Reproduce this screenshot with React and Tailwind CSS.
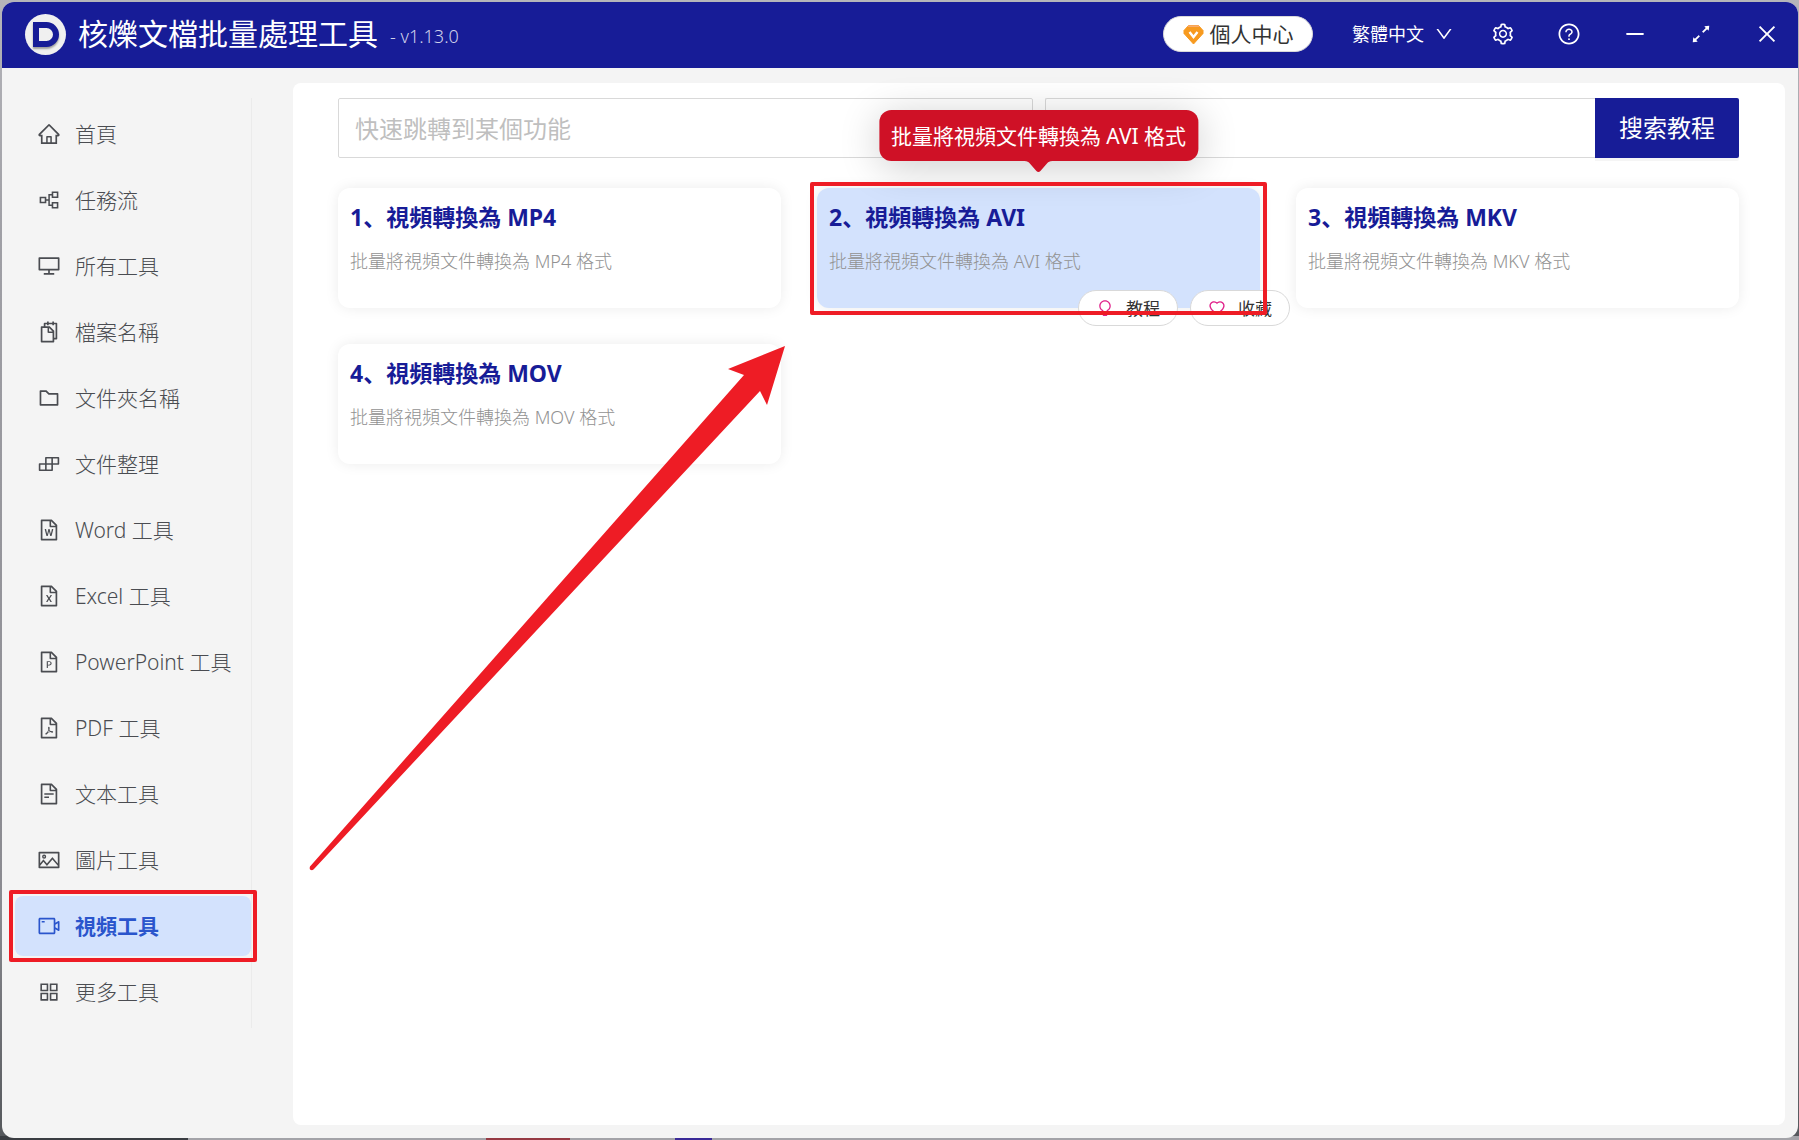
import React, { useState } from 'react';
import {
  AiOutlineAppstore,
  AiOutlineArrowsAlt,
  AiOutlineBuild,
  AiOutlineBulb,
  AiOutlineClose,
  AiOutlineDesktop,
  AiOutlineDown,
  AiOutlineFileExcel,
  AiOutlineFilePdf,
  AiOutlineFilePpt,
  AiOutlineFileText,
  AiOutlineFileWord,
  AiOutlineFolder,
  AiOutlineHeart,
  AiOutlineHome,
  AiOutlineMinus,
  AiOutlinePartition,
  AiOutlinePicture,
  AiOutlineQuestionCircle,
  AiOutlineSetting,
  AiOutlineSnippets,
  AiOutlineVideoCamera,
} from 'react-icons/ai';

const menu = [
  { label: '首頁', icon: AiOutlineHome },
  { label: '任務流', icon: AiOutlinePartition },
  { label: '所有工具', icon: AiOutlineDesktop },
  { label: '檔案名稱', icon: AiOutlineSnippets },
  { label: '文件夾名稱', icon: AiOutlineFolder },
  { label: '文件整理', icon: AiOutlineBuild },
  { label: 'Word 工具', icon: AiOutlineFileWord },
  { label: 'Excel 工具', icon: AiOutlineFileExcel },
  { label: 'PowerPoint 工具', icon: AiOutlineFilePpt },
  { label: 'PDF 工具', icon: AiOutlineFilePdf },
  { label: '文本工具', icon: AiOutlineFileText },
  { label: '圖片工具', icon: AiOutlinePicture },
  { label: '視頻工具', icon: AiOutlineVideoCamera },
  { label: '更多工具', icon: AiOutlineAppstore },
];

const tools = [
  { title: '視頻轉換為 MP4', desc: '批量將視頻文件轉換為 MP4 格式' },
  { title: '視頻轉換為 AVI', desc: '批量將視頻文件轉換為 AVI 格式', active: true },
  { title: '視頻轉換為 MKV', desc: '批量將視頻文件轉換為 MKV 格式' },
  { title: '視頻轉換為 MOV', desc: '批量將視頻文件轉換為 MOV 格式' },
];

const windowActions = [
  { label: '設置', icon: AiOutlineSetting },
  { label: '幫助', icon: AiOutlineQuestionCircle },
  { label: '最小化', icon: AiOutlineMinus },
  { label: '還原', icon: AiOutlineArrowsAlt },
  { label: '關閉', icon: AiOutlineClose },
];

function Logo() {
  return (
    <div className="flex h-[41px] w-[41px] items-center justify-center rounded-full bg-[#f0f0f0]">
      <div className="h-[25px] w-[26px] rounded-l-sm rounded-r-full border-6 border-[#171c97] bg-[#f0f0f0] shadow-[0_2px_2px_rgba(0,0,0,0.35)]" />
    </div>
  );
}

function GemIcon() {
  return (
    <svg width="21" height="21" viewBox="0 0 21 21" aria-hidden="true">
      <path d="M5.5 1.5h10L20 6.5v3L10.5 20 1 9.5v-3z" fill="#f79a1f" stroke="#f79a1f" strokeLinejoin="round" />
      <path d="M5.5 1.5h10l1.2 1.3H4.3z" fill="#f9b08a" />
      <path d="M6.5 8l4 5 4-5" fill="none" stroke="#fff" strokeWidth="2.4" />
    </svg>
  );
}

function Header() {
  return (
    <header className="flex h-[66px] shrink-0 items-center bg-[#171c97] pb-0.5 pl-[23px] text-white">
      <Logo />
      <h1 className="ml-3 text-[30px] leading-9">核爍文檔批量處理工具</h1>
      <span className="ml-3 pt-1 text-lg font-light text-[#d0d1ea]">- v1.13.0</span>

      <div className="-mr-0.5 ml-auto flex items-center">
        <button
          type="button"
          className="flex h-9 w-[150px] items-center justify-center gap-1.5 rounded-full border border-[#d9d9d9] bg-white text-[21px] leading-none text-[#333]"
        >
          <GemIcon />
          個人中心
        </button>
        <label className="ml-[39px] flex items-center gap-2.5">
          <select aria-label="語言" className="appearance-none bg-transparent text-lg leading-none text-white">
            <option>繁體中文</option>
            <option>简体中文</option>
            <option>English</option>
          </select>
          <AiOutlineDown size={20} />
        </label>
        <nav className="ml-4 flex">
          {windowActions.map(({ label, icon: Icon }) => (
            <button
              key={label}
              type="button"
              aria-label={label}
              className="flex h-[60px] w-[66px] items-center justify-center"
            >
              <Icon size={24} />
            </button>
          ))}
        </nav>
      </div>
    </header>
  );
}

function Sidebar({ current, onSelect }) {
  return (
    <nav className="flex w-[250px] shrink-0 flex-col gap-1.5 border-r border-[#ebebeb] py-1.5 pl-[13px]">
      {menu.map(({ label, icon: Icon }) => {
        const selected = label === current;
        return (
          <div key={label} className="relative">
            <button
              type="button"
              onClick={() => onSelect(label)}
              className={`flex h-[60px] w-full items-center gap-3.5 rounded-lg pl-[22px] text-left text-[21px] ${
                selected ? 'bg-[#d3e2fd] font-bold text-[#2a55cc]' : 'font-light text-[#4a4c51]'
              }`}
            >
              <Icon size={24} />
              <span className="pt-0.5">{label}</span>
            </button>
            {selected && (
              <div className="pointer-events-none absolute -inset-1.5 z-10 rounded-xs border-4 border-[#ee1c25]" />
            )}
          </div>
        );
      })}
    </nav>
  );
}

function SearchBar() {
  return (
    <div className="grid grid-cols-2 gap-3">
      <input
        type="text"
        aria-label="快速跳轉到某個功能"
        placeholder="快速跳轉到某個功能"
        className="h-[60px] w-full rounded-xs border border-[#d9d9d9] px-4 text-2xl outline-none placeholder:text-[#bfbfbf]"
      />
      <form className="flex" onSubmit={(e) => e.preventDefault()}>
        <input
          type="text"
          aria-label="搜索教程"
          className="h-[60px] min-w-0 flex-1 rounded-l-xs border border-r-0 border-[#d9d9d9] px-4 text-2xl outline-none"
        />
        <button
          type="submit"
          className="h-[60px] w-36 rounded-r-xs bg-[#171c97] text-2xl text-white shadow-[0_3px_0_rgba(0,0,0,0.04)]"
        >
          搜索教程
        </button>
      </form>
    </div>
  );
}

function ToolCard({ index, title, desc, active }) {
  return (
    <article
      className={`relative h-[120px] rounded-xl px-3 pt-[11px] shadow-[0_0_14px_rgba(0,0,0,0.08)] ${
        active ? 'bg-[#d3e2fd]' : 'bg-white'
      }`}
    >
      <h2 className="text-[23px] leading-9 font-bold text-[#171c97]">
        {index}、{title}
      </h2>
      <p className="mt-3 text-lg leading-7 font-light text-[#929292]">{desc}</p>

      {active && (
        <>
          <div
            role="tooltip"
            className="absolute bottom-full left-1/2 mb-[27px] -translate-x-1/2 rounded-xl bg-[#cf1126] px-3 pt-[11px] pb-[9px] text-[21px] leading-[31px] whitespace-nowrap text-white shadow-[0_6px_40px_rgba(0,0,0,0.2)]"
          >
            {desc}
            <svg className="absolute top-full left-1/2 -translate-x-1/2" width="28" height="12" viewBox="0 0 28 12">
              <path d="M0 0c3 0 4 1 5 2l7 8q2 2 4 0l7-8c1-1 2-2 5-2z" fill="#cf1126" />
            </svg>
          </div>
          <div className="absolute -right-[30px] -bottom-[18px] flex gap-3">
            <button
              type="button"
              className="flex h-9 w-[100px] items-center justify-center gap-3 rounded-full border border-[#d9d9d9] bg-white text-[17px] leading-none text-[#333]"
            >
              <AiOutlineBulb size={18} color="#e0218a" />
              教程
            </button>
            <button
              type="button"
              className="flex h-9 w-[100px] items-center justify-center gap-3 rounded-full border border-[#d9d9d9] bg-white text-[17px] leading-none text-[#333]"
            >
              <AiOutlineHeart size={18} color="#e0218a" />
              收藏
            </button>
          </div>
          <div className="pointer-events-none absolute -inset-x-[7px] -top-1.5 -bottom-[7px] rounded-xs border-4 border-[#ee1c25]" />
        </>
      )}
    </article>
  );
}

// Pointer from the sidebar up to the highlighted card
function PointerArrow() {
  return (
    <svg
      className="pointer-events-none absolute top-[263px] left-4"
      width="480"
      height="528"
      viewBox="0 0 480 528"
      aria-hidden="true"
    >
      <path d="M476 0L419 23l16 6L1 520.500q-1 3 1 3.500t3-1L451 45l7 14z" fill="#ee1c25" />
    </svg>
  );
}

function App() {
  const [current, setCurrent] = useState('視頻工具');

  return (
    <div className="flex min-h-screen flex-col bg-[linear-gradient(90deg,#3a3d42_188px,#a3a3a8_188px_486px,#963a44_486px_570px,#a3a3a8_570px_675px,#3a2a98_675px_712px,#a3a3a8_712px)] bg-bottom bg-no-repeat font-['Noto_Sans','Noto_Sans_CJK_SC',sans-serif]">
      <div className="flex flex-1 flex-col bg-[linear-gradient(180deg,#b5b5ba,#a0a0a6_20%,#8a8a90_80%,#55585c)] bg-[length:100%_calc(100%-4px)] bg-no-repeat pt-0.5 pr-px pb-0.5 pl-0.5">
        <div className="flex flex-1 flex-col overflow-hidden rounded-xl bg-[#f4f4f4]">
          <Header />
          <div className="flex flex-1 pr-[13px] pb-[13px]">
            <div className="pt-[30px]">
              <Sidebar current={current} onSelect={setCurrent} />
            </div>
            <main className="relative mt-[15px] ml-[41px] flex-1 rounded-lg bg-white pt-[15px] pr-[46px] pl-[45px]">
              <SearchBar />
              <section className="mt-[30px] grid grid-cols-3 gap-9">
                {tools.map((tool, i) => (
                  <ToolCard key={tool.title} index={i + 1} {...tool} />
                ))}
              </section>
              <PointerArrow />
            </main>
          </div>
        </div>
      </div>
    </div>
  );
}

export default App;
